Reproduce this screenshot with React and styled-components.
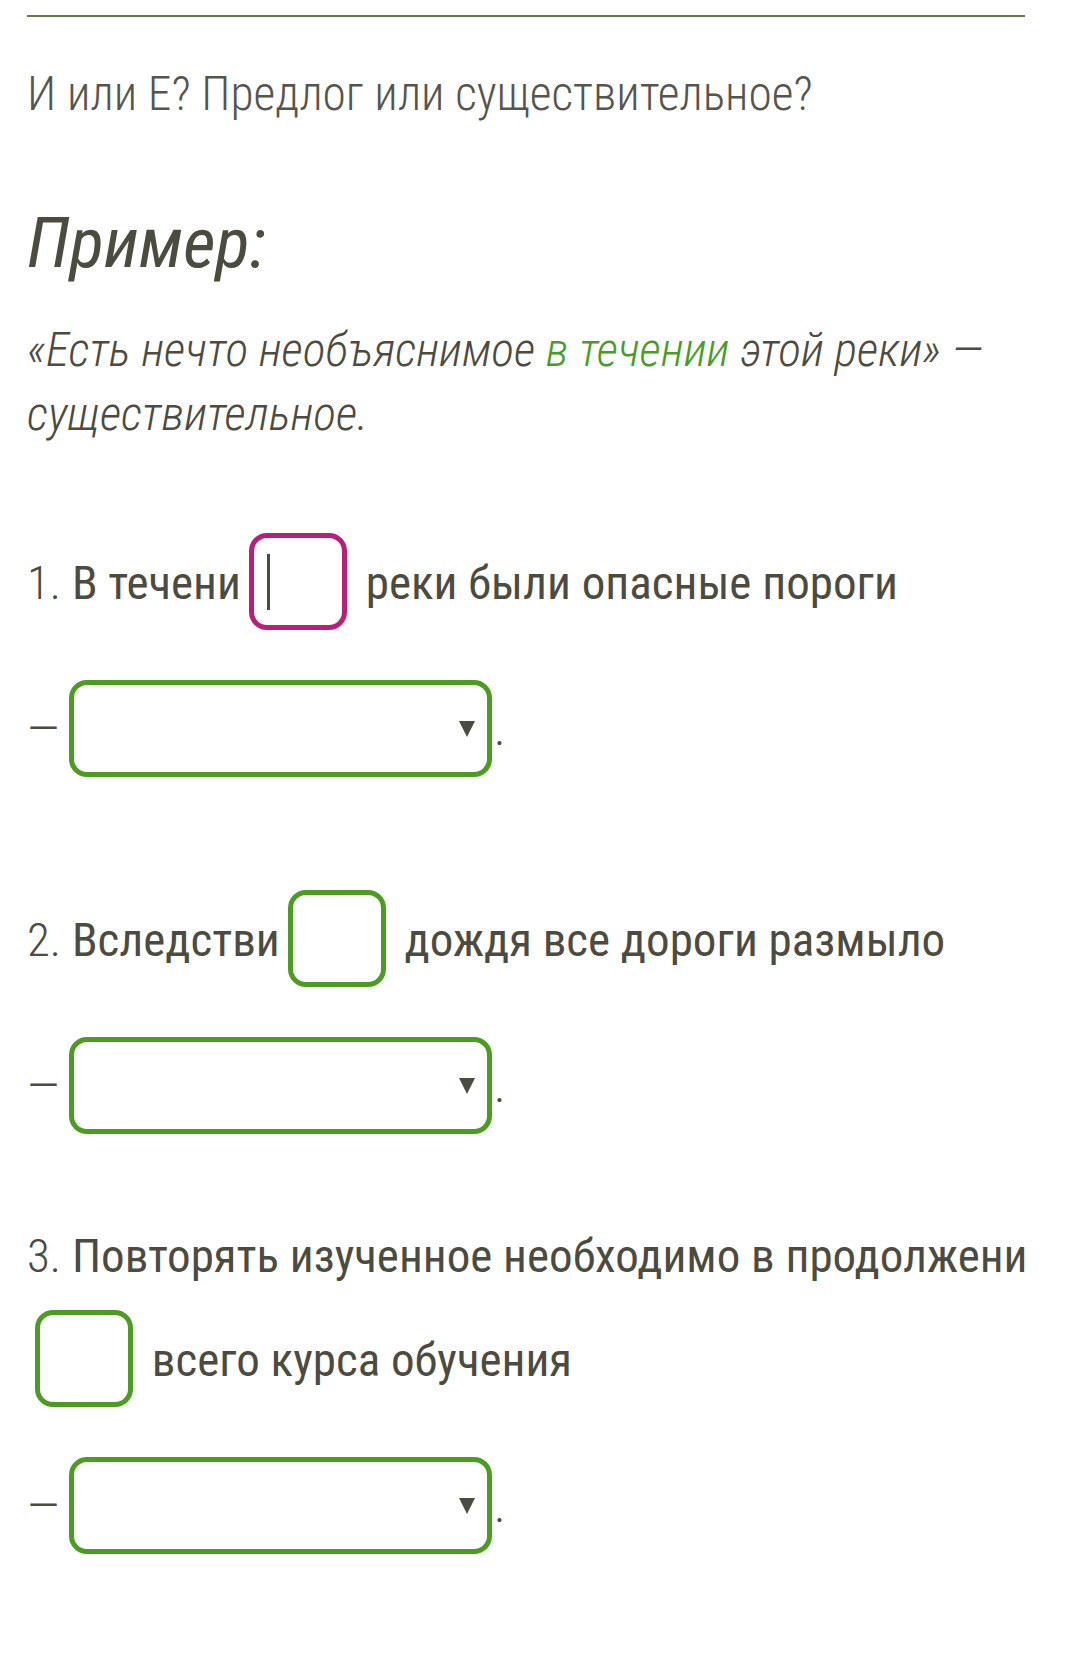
import React from "react";
import styled, { createGlobalStyle } from "styled-components";

const GlobalStyle = createGlobalStyle`
  body {
    margin: 0;
    background: #fff;
  }
`;

const font = `"Roboto Condensed", "Liberation Sans Narrow", "DejaVu Sans Condensed", Roboto, sans-serif`;

const Page = styled.div`
  font-family: ${font};
  color: #4b4b40;
  padding: 15px 34px 0 27px;
  min-height: 1669px;
  box-sizing: border-box;
`;

const Divider = styled.hr`
  border: 0;
  height: 2px;
  margin: 0 6px 0 0;
  background: #62804a;
`;

const Title = styled.h2`
  margin: 47px 0 0;
  font-size: 47.4px;
  font-weight: 300;
  line-height: 60px;
  color: #55554f;
`;

const ExampleHeading = styled.h3`
  margin: 76px 0 0;
  font-size: 71px;
  font-weight: 400;
  font-style: italic;
  line-height: 86px;
`;

const Quote = styled.p`
  margin: 32px 0 0;
  font-size: 47.7px;
  font-weight: 300;
  font-style: italic;
  line-height: 64px;
`;

const Highlight = styled.span`
  color: #479d26;
`;

const Task = styled.div`
  margin-top: ${({ $gap }) => $gap}px;
`;

const Sentence = styled.p`
  margin: 0;
  font-size: 47px;
  line-height: 104px;
`;

const Num = styled.span`
  font-weight: 300;
`;

const Blank = styled.span`
  display: inline-block;
  width: 88px;
  height: 87px;
  border: 5px solid ${({ $active }) => ($active ? "#b91f78" : "#4c9c22")};
  border-radius: 18px;
  vertical-align: -31px;
  margin: 0 8px;
  position: relative;
`;

const Caret = styled.span`
  position: absolute;
  left: 13px;
  top: 16px;
  width: 3px;
  height: 56px;
  background: #4b4b40;
`;

const AnswerRow = styled.div`
  display: flex;
  align-items: center;
  margin-top: 45px;
  font-size: 48px;
  font-weight: 300;
`;

const Dash = styled.span`
  margin-right: 10px;
`;

const Select = styled.div`
  width: 401px;
  height: 87px;
  border: 5px solid #4c9c22;
  border-radius: 18px;
  display: flex;
  align-items: center;
  justify-content: flex-end;
  padding-right: 12px;
`;

const Arrow = styled.span`
  width: 0;
  height: 0;
  border-left: 8px solid transparent;
  border-right: 8px solid transparent;
  border-top: 16px solid #4b4b40;
`;

const Period = styled.span`
  margin-left: 2px;
`;

function Answer() {
  return (
    <AnswerRow>
      <Dash>—</Dash>
      <Select>
        <Arrow />
      </Select>
      <Period>.</Period>
    </AnswerRow>
  );
}

export default function App() {
  return (
    <Page>
      <GlobalStyle />
      <Divider />
      <Title>И или Е? Предлог или существительное?</Title>
      <ExampleHeading>Пример:</ExampleHeading>
      <Quote>
        «Есть нечто необъяснимое <Highlight>в течении</Highlight> этой реки» —
        существительное.
      </Quote>

      <Task $gap={85}>
        <Sentence>
          <Num>1.</Num> В течени
          <wbr />
          <Blank $active>
            <Caret />
          </Blank>
          {" "}реки были опасные пороги
        </Sentence>
        <Answer />
      </Task>

      <Task $gap={111}>
        <Sentence>
          <Num>2.</Num> Вследстви
          <wbr />
          <Blank />
          {" "}дождя все дороги размыло
        </Sentence>
        <Answer />
      </Task>

      <Task $gap={70}>
        <Sentence>
          <Num>3.</Num> Повторять изученное необходимо в продолжени
          <wbr />
          <Blank />
          {" "}всего курса обучения
        </Sentence>
        <Answer />
      </Task>
    </Page>
  );
}
